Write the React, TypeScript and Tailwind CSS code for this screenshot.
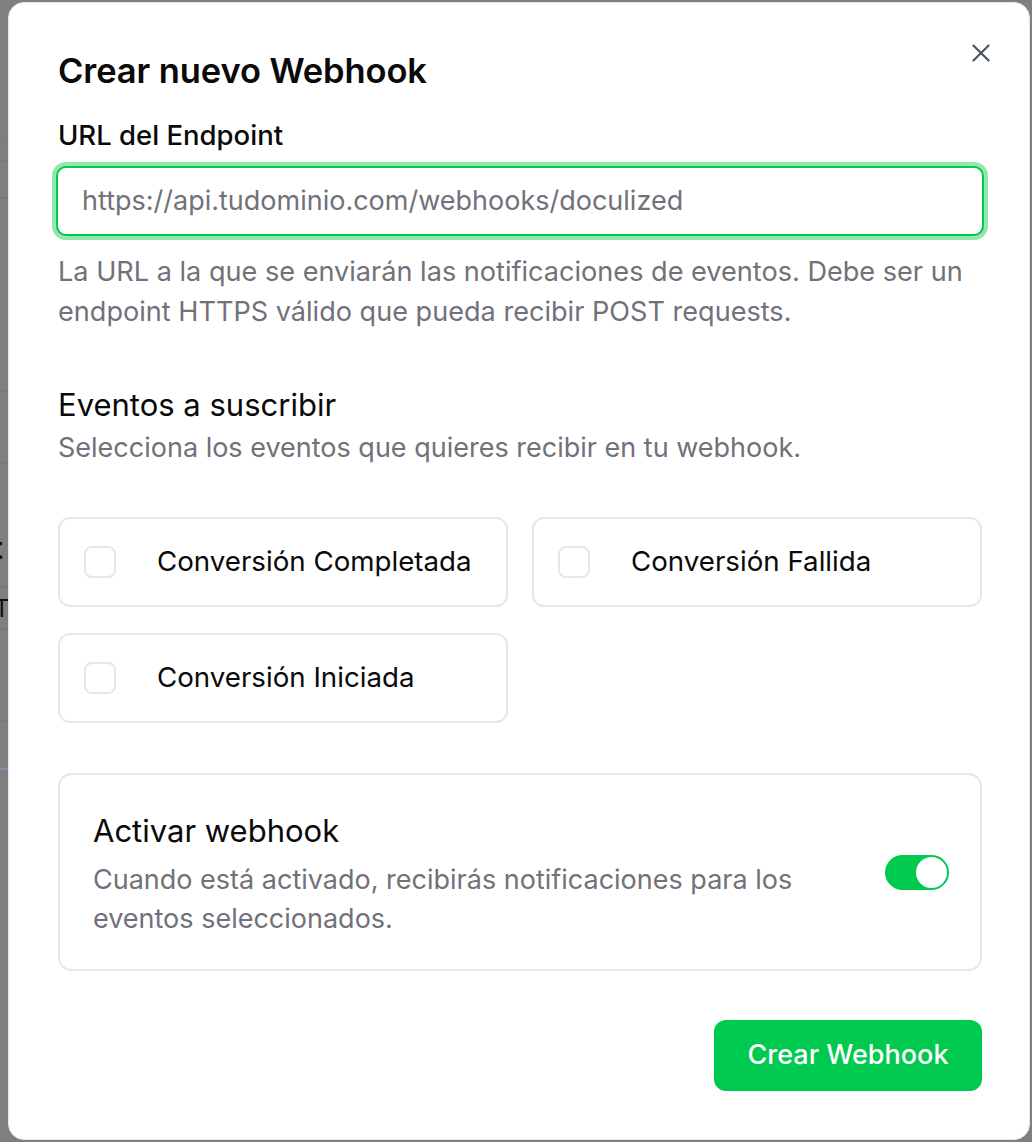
import React, { useState } from "react";

function Checkbox() {
  return <div className="h-[32px] w-[32px] shrink-0 rounded-[8px] border-2 border-[#e5e7eb] bg-white" />;
}

function EventCard({ label }: { label: string }) {
  return (
    <div className="flex h-[90px] items-center gap-[41px] rounded-[12px] border-2 border-[#e5e7eb] bg-white pl-[24px]">
      <Checkbox />
      <span className="text-[27.7px] text-[#0a0a0a]">{label}</span>
    </div>
  );
}

export default function App() {
  const [on, setOn] = useState(true);
  return (
    <div
      className="relative h-[1142px] w-[1032px] overflow-hidden bg-[#7f7f7f]"
      style={{ fontFamily: "Inter, 'Noto Sans', sans-serif" }}
    >
      {/* dimmed page behind */}
      <div className="absolute left-0 top-0 h-full w-[8px] text-[#3a3a3a]">
        <div className="absolute left-[-14px] top-[122px] text-[26px] leading-[30px]">e</div>
        <div className="absolute left-0 top-[160px] h-[2px] w-[8px] bg-[#77777f]" />
        <div className="absolute left-0 top-[197px] h-[2px] w-[8px] bg-[#77777f]" />
        <div className="absolute left-[-14px] top-[422px] text-[24px] leading-[30px] text-[#555]">u</div>
        <div className="absolute left-0 top-[390px] h-[2px] w-[8px] bg-[#77777f]" />
        <div className="absolute left-0 top-[462px] h-[2px] w-[8px] bg-[#77777f]" />
        <div className="absolute left-[-8px] top-[530px] text-[30px] font-bold leading-[36px] text-[#111]">t</div>
        <div className="absolute left-0 top-[586px] h-[2px] w-[8px] bg-[#77777f]" />
        <div className="absolute left-[-6px] top-[594px] text-[24px] leading-[30px] text-[#111]">T</div>
        <div className="absolute left-0 top-[628px] h-[2px] w-[8px] bg-[#77777f]" />
        <div className="absolute left-0 top-[720px] h-[2px] w-[8px] bg-[#77777f]" />
        <div className="absolute left-0 top-[768px] h-[2px] w-[8px] bg-[#8a8ab0]" />
      </div>

      {/* modal */}
      <div className="absolute left-[8px] top-[2px] flex h-[1138px] w-[1022px] flex-col rounded-[16px] border border-[#e5e7eb] bg-white pl-[49px] pr-[47px] pt-[48px]">
        <button className="absolute right-[35px] top-[37px] text-[#4b5563]" aria-label="close">
          <svg width="26" height="26" viewBox="0 0 24 24" fill="none" stroke="currentColor" strokeWidth="2" strokeLinecap="round">
            <path d="M5 5l14 14M19 5L5 19" />
          </svg>
        </button>

        <h2 className="text-[34.5px] font-semibold leading-[40px] tracking-[-0.1px] text-[#0a0a0a]">Crear nuevo Webhook</h2>

        <label className="mt-[27px] text-[27.5px] font-medium leading-[34px] text-[#0a0a0a]">URL del Endpoint</label>
        <div className="-mx-[6px] mt-[10px] rounded-[14px] bg-[#93e6ad] p-[4px]">
          <div className="flex h-[70px] items-center rounded-[10px] border-2 border-[#00c950] bg-white px-[24px]">
            <span className="text-[27px] text-[#71717a]">https://api.tudominio.com/webhooks/doculized</span>
          </div>
        </div>
        <p className="mt-[12px] text-[27.1px] leading-[40px] text-[#71717a]">
          La URL a la que se enviarán las notificaciones de eventos. Debe ser un endpoint HTTPS válido que pueda recibir POST requests.
        </p>

        <h3 className="mt-[54px] text-[31px] font-normal leading-[38px] text-[#0a0a0a]">Eventos a suscribir</h3>
        <p className="mt-[7px] text-[27px] leading-[34px] text-[#71717a]">Selecciona los eventos que quieres recibir en tu webhook.</p>

        <div className="mt-[52px] grid grid-cols-2 gap-x-[24px] gap-y-[26px]">
          <EventCard label="Conversión Completada" />
          <EventCard label="Conversión Fallida" />
          <EventCard label="Conversión Iniciada" />
        </div>

        <div className="mt-[50px] flex h-[198px] items-center justify-between rounded-[14px] border-2 border-[#e5e7eb] pl-[33px] pr-[31px]">
          <div className="flex flex-col pt-[6px]">
            <span className="text-[31px] font-normal leading-[38px] text-[#0a0a0a]">Activar webhook</span>
            <span className="mt-[10px] w-[730px] text-[27px] leading-[39px] text-[#71717a]">
              Cuando está activado, recibirás notificaciones para los eventos seleccionados.
            </span>
          </div>
          <button
            onClick={() => setOn(!on)}
            className="flex h-[35px] w-[64px] items-center rounded-full bg-[#00c950] p-[2px]"
          >
            <span className={"h-[31px] w-[31px] rounded-full bg-white " + (on ? "ml-auto" : "")} />
          </button>
        </div>

        <div className="mt-[49px] flex justify-end">
          <button className="h-[71px] w-[268px] rounded-[12px] bg-[#00c950] text-[27px] font-medium text-white">
            Crear Webhook
          </button>
        </div>
      </div>
    </div>
  );
}
